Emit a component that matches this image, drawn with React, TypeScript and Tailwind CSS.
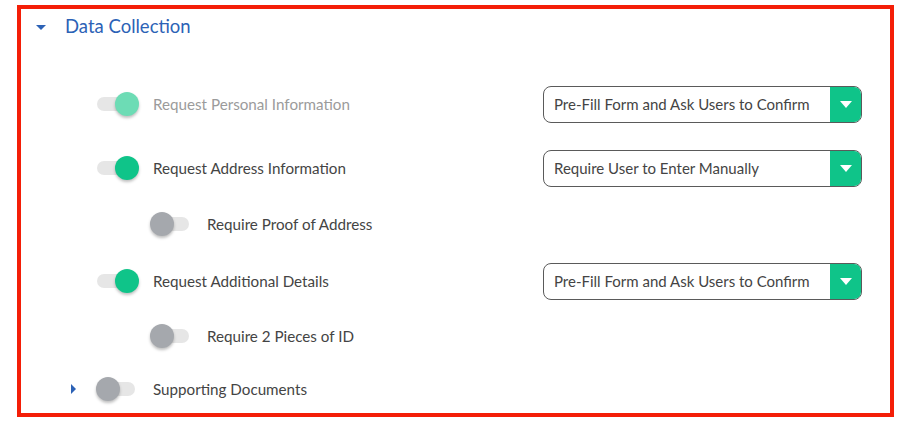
import React from 'react';

type Mode = 'on' | 'off' | 'disabled';

function Toggle({ mode }: { mode: Mode }) {
  const knob =
    mode === 'on'
      ? 'left-[19px] bg-[#0fc489]'
      : mode === 'disabled'
        ? 'left-[19px] bg-[#6ddcb5]'
        : 'left-0 bg-[#a5a8ad]';
  return (
    <div className="relative w-[43px] h-[24px] shrink-0">
      <div className="absolute left-[1px] top-[5px] w-[38px] h-[14px] rounded-full bg-[#e6e6e6]" />
      <div className={`absolute top-0 w-[24px] h-[24px] rounded-full shadow-[0_2px_3px_rgba(0,0,0,0.25)] ${knob}`} />
    </div>
  );
}

function Select({ value }: { value: string }) {
  return (
    <div className="flex w-[319px] h-[37px] rounded-[8px] border border-[#5a5a5a] overflow-hidden">
      <div className="flex-1 flex items-center pl-[10px] text-[15px] text-[#444]">{value}</div>
      <div className="w-[31px] bg-[#0fc489] flex items-center justify-center">
        <svg width="12" height="7" viewBox="0 0 12 7">
          <path d="M0 0h12L6 7z" fill="#fff" />
        </svg>
      </div>
    </div>
  );
}

function Row({
  label,
  mode,
  select,
  indent = false,
  muted = false,
  caret = false,
  className = '',
}: {
  label: string;
  mode: Mode;
  select?: string;
  indent?: boolean;
  muted?: boolean;
  caret?: boolean;
  className?: string;
}) {
  return (
    <div className={`flex items-center h-[38px] pr-[28px] ${className}`}>
      <div className={`flex items-center ${indent ? 'pl-[129px]' : 'pl-[75px]'}`}>
        {caret ? (
          <svg width="5" height="10" viewBox="0 0 5 10" className="-ml-[25px] mr-[20px]">
            <path d="M0 0l5 5-5 5z" fill="#2c62b6" />
          </svg>
        ) : null}
        <Toggle mode={mode} />
        <span className={`ml-[14px] text-[15.2px] ${muted ? 'text-[#9b9b9b]' : 'text-[#444]'}`}>{label}</span>
      </div>
      {select ? <div className="ml-auto"><Select value={select} /></div> : null}
    </div>
  );
}

export default function App() {
  return (
    <div className="w-[924px] h-[425px] bg-white pt-[5px] pl-[17px]" style={{ fontFamily: 'Lato, "Open Sans", sans-serif' }}>
      <div className="w-[877px] h-[412px] border-4 border-[#f41e07]">
        <div className="flex items-center h-[36px] pl-[15px]">
          <svg width="10" height="5" viewBox="0 0 10 5">
            <path d="M0 0h10L5 5z" fill="#2c62b6" />
          </svg>
          <span className="ml-[19px] text-[18.5px] text-[#2c62b6]">Data Collection</span>
        </div>
        <Row className="mt-[40px]" label="Request Personal Information" mode="disabled" muted select="Pre-Fill Form and Ask Users to Confirm" />
        <Row className="mt-[26px]" label="Request Address Information" mode="on" select="Require User to Enter Manually" />
        <Row className="mt-[18px]" label="Require Proof of Address" mode="off" indent />
        <Row className="mt-[19px]" label="Request Additional Details" mode="on" select="Pre-Fill Form and Ask Users to Confirm" />
        <Row className="mt-[17px]" label="Require 2 Pieces of ID" mode="off" indent />
        <Row className="mt-[15px]" label="Supporting Documents" mode="off" caret />
      </div>
    </div>
  );
}
